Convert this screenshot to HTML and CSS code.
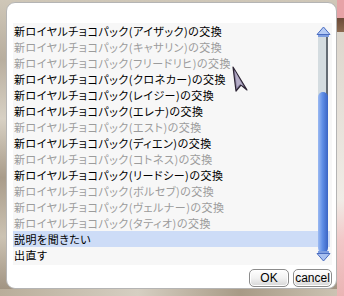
FILE: index.html
```html
<!DOCTYPE html>
<html>
<head>
    <meta charset="utf-8">
    <link rel="stylesheet" href="styles.css">
</head>
<body>
    <div class="scene">
        <div class="window">
            <div class="list">
                <div class="row">新ロイヤルチョコパック(アイザック)の交換</div>
                <div class="row off">新ロイヤルチョコパック(キャサリン)の交換</div>
                <div class="row off">新ロイヤルチョコパック(フリードリヒ)の交換</div>
                <div class="row">新ロイヤルチョコパック(クロネカー)の交換</div>
                <div class="row">新ロイヤルチョコパック(レイジー)の交換</div>
                <div class="row">新ロイヤルチョコパック(エレナ)の交換</div>
                <div class="row off">新ロイヤルチョコパック(エスト)の交換</div>
                <div class="row">新ロイヤルチョコパック(ディエン)の交換</div>
                <div class="row off">新ロイヤルチョコパック(コトネス)の交換</div>
                <div class="row">新ロイヤルチョコパック(リードシー)の交換</div>
                <div class="row off">新ロイヤルチョコパック(ボルセブ)の交換</div>
                <div class="row off">新ロイヤルチョコパック(ヴェルナー)の交換</div>
                <div class="row off">新ロイヤルチョコパック(タティオ)の交換</div>
                <div class="row selected">説明を聞きたい</div>
                <div class="row">出直す</div>

                <!-- scrollbar sits over the right end of the rows -->
                <svg class="scrollbar" width="15" height="238" viewBox="0 0 15 238">
                    <defs>
                        <linearGradient id="thumb" x1="0" y1="0" x2="1" y2="0">
                            <stop offset="0" stop-color="#9cbaf2"/>
                            <stop offset="0.45" stop-color="#5f8ee6"/>
                            <stop offset="1" stop-color="#3a64c4"/>
                        </linearGradient>
                    </defs>
                    <polygon points="7.5,1 14,8.5 1,8.5" fill="#b4caf4" stroke="#4a6cc0" stroke-width="1"/>
                    <rect x="2" y="9" width="11" height="2" fill="#7e9ee0"/>
                    <rect x="2" y="11" width="10" height="60" fill="#d4dce0"/>
                    <rect x="10" y="11" width="2" height="60" fill="#646c74"/>
                    <rect x="2" y="66" width="10" height="161" rx="5" fill="url(#thumb)"/>
                    <rect x="2" y="225" width="11" height="2" fill="#7e9ee0"/>
                    <polygon points="1,227.5 14,227.5 7.5,235" fill="#a8c0f0" stroke="#4a6cc0" stroke-width="1"/>
                </svg>
            </div>
            <div class="buttons">
                <button class="btn btn-ok">OK</button>
                <button class="btn btn-cancel">cancel</button>
            </div>
        </div>

        <svg class="cursor" width="17" height="27" viewBox="0 0 17 27">
            <polygon points="1,1 15,24 9,19 4,25" fill="#8e86a6" stroke="#2c2434" stroke-width="1.2" stroke-linejoin="round"/>
            <polygon points="3,5 11,20 8,18 5,21" fill="#b6aec8"/>
        </svg>
    </div>
</body>
</html>
```

FILE: styles.css
```css
html, body {
	margin: 0;
	padding: 0;
}
body {
	width: 344px;
	height: 296px;
	overflow: hidden;
	font-family: "Noto Sans CJK JP", "Liberation Sans", sans-serif;
}
.scene {
	position: relative;
	width: 344px;
	height: 296px;
	padding: 2px 7px 6px 6px;
	box-sizing: border-box;
	background:
		linear-gradient(180deg, #e6a2a6 0, #e6a2a6 18px, #6b4a38 18px, #8c6a50 32px, #ddd6cc 32px, #f0ece6 200px, #f2c8c8 240px, #eab4b4 296px) right top / 7px 296px no-repeat,
		linear-gradient(90deg, #b9ad9a, #d6cfc2 40%, #a89a86 70%, #cfc6b6) left bottom / 344px 7px no-repeat,
		linear-gradient(180deg, #cfc7b8, #b8ae9e 20%, #d8d1c4 40%, #a99c8a 60%, #ccc3b3 80%, #9c8e7c);
}
.window {
	height: 287px;
	box-sizing: border-box;
	background: #fff;
	border: 1px solid #b4b4b4;
	border-radius: 9px;
	padding: 20px 4px 0 6px;
}
.list {
	position: relative;
	height: 242px;
	background: #f7f7f7;
}
.row {
	height: 16px;
	line-height: 16px;
	padding-left: 1px;
	font-size: 11px;
	letter-spacing: 0.5px;
	font-feature-settings: "palt";
	color: #000;
	white-space: nowrap;
}
.row.off {
	color: #9c9c9c;
}
.row.selected {
	background: #cddcf7;
	margin-right: 2px;
}
.scrollbar {
	position: absolute;
	right: 1px;
	top: 3px;
	display: block;
}
.buttons {
	display: flex;
	justify-content: flex-end;
	gap: 4px;
	padding: 4px 0 0;
}
.btn {
	height: 18px;
	padding: 0;
	border: 1px solid #8c8c8c;
	border-radius: 5px;
	background: linear-gradient(180deg, #ffffff 0, #f2f2f2 50%, #d6d6d6 100%);
	box-shadow: inset 0 0 0 1px #fff;
	font-family: "Liberation Sans", sans-serif;
	font-size: 12px;
	line-height: 16px;
	color: #000;
}
.btn-ok {
	width: 40px;
}
.btn-cancel {
	width: 39px;
}
.cursor {
	position: absolute;
	left: 232px;
	top: 66px;
}
```
